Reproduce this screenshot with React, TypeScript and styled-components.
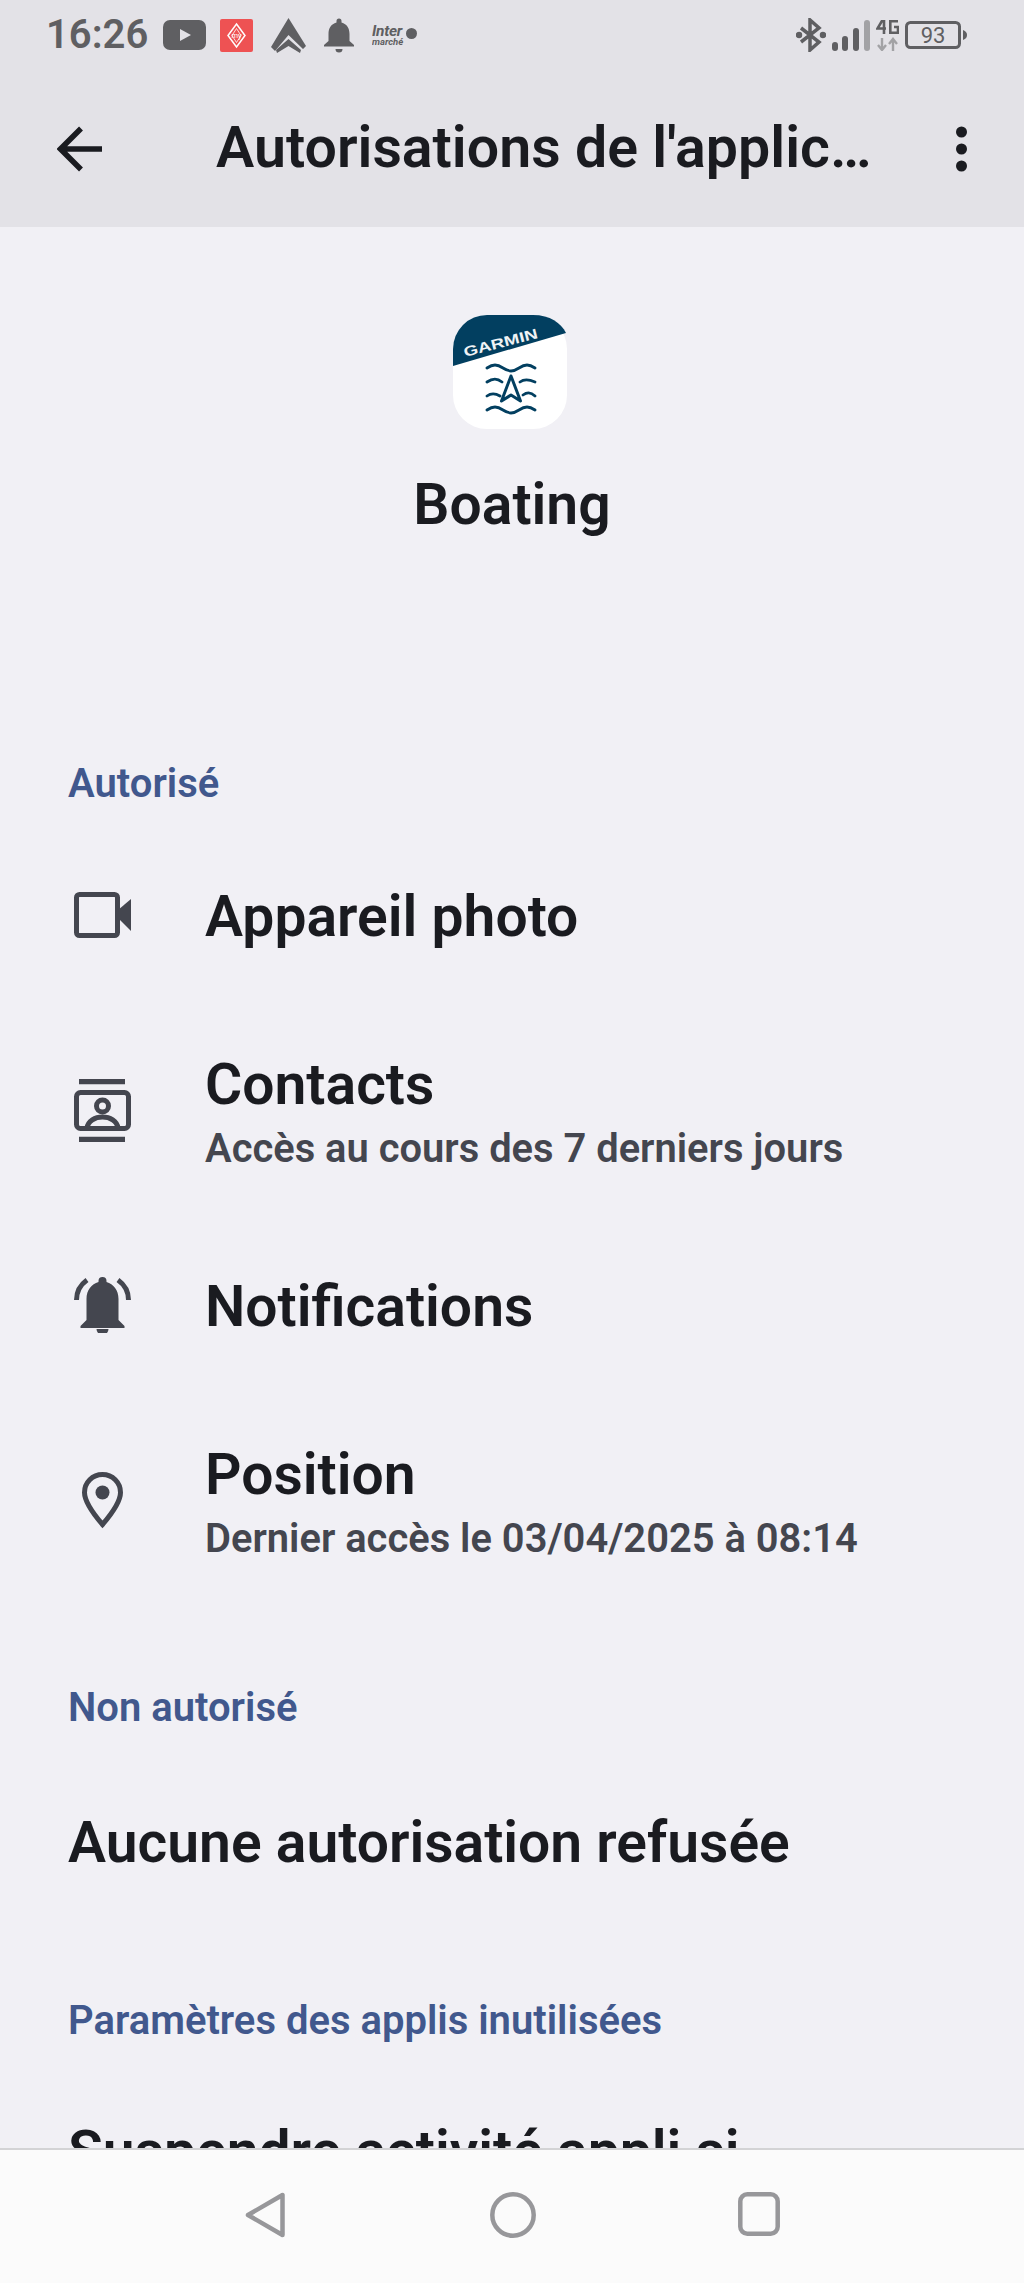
import React from 'react';
import styled, { createGlobalStyle } from 'styled-components';

const Global = createGlobalStyle`
  html, body { margin: 0; padding: 0; background: #f1f0f5; }
  body { font-family: Roboto, "Noto Sans", sans-serif; }
`;

const Page = styled.div`
  width: 1024px;
  height: 2283px;
  display: flex;
  flex-direction: column;
  overflow: hidden;
  background: #f1f0f5;
`;

const Top = styled.header`
  background: #e3e2e7;
  height: 227px;
  flex: none;
  display: flex;
  flex-direction: column;
`;

const StatusBar = styled.div`
  height: 70px;
  padding: 0 57px 0 46px;
  display: flex;
  align-items: center;
  justify-content: space-between;
  color: #5f5f62;
`;

const StatusGroup = styled.div<{ $gap: number }>`
  display: flex;
  align-items: center;
  gap: ${p => p.$gap}px;
`;

const TightSlot = styled.span`
  display: flex;
  margin-right: -4px;
`;

const Clock = styled.span`
  font-size: 40px;
  font-weight: 600;
  line-height: 1;
  margin-right: -3px;
`;

const Toolbar = styled.div`
  height: 157px;
  display: flex;
  align-items: center;
  padding: 0 57px;
`;

const Title = styled.h1`
  margin: 0 0 0 113px;
  font-size: 57.3px;
  font-weight: 600;
  color: #1a1b20;
  white-space: nowrap;
  line-height: 1.2;
`;

const Menu = styled.div`
  margin-left: auto;
  display: flex;
`;

const Body = styled.main`
  flex: 1;
  min-height: 0;
  overflow: hidden;
`;

const AppHead = styled.section`
  padding-top: 88px;
  display: flex;
  flex-direction: column;
  align-items: center;
  height: 441px;
  box-sizing: border-box;
`;

const LogoSlot = styled.div`
  display: flex;
  margin-right: 4px;
`;

const AppName = styled.h2`
  margin: 44px 0 0;
  font-size: 57px;
  font-weight: 600;
  line-height: 64px;
  color: #1a1b20;
`;

const SectionLabel = styled.h3<{ $top: number; $bottom: number }>`
  margin: ${p => p.$top}px 0 ${p => p.$bottom}px;
  padding-left: 68px;
  height: 60px;
  display: flex;
  align-items: center;
  font-size: 40px;
  font-weight: 600;
  color: #41588d;
`;

const Row = styled.div<{ $two?: boolean }>`
  height: ${p => (p.$two ? 210 : 180)}px;
  display: flex;
  align-items: center;
  padding-left: 64px;
`;

const IconSlot = styled.div`
  width: 77px;
  margin-right: 64px;
  padding-bottom: 4px;
  display: flex;
  justify-content: center;
  flex: none;
  color: #44464f;
`;

const RowText = styled.div`
  display: flex;
  flex-direction: column;
`;

const RowTitle = styled.div`
  font-size: 57px;
  font-weight: 600;
  line-height: 66px;
  color: #1a1b20;
`;

const RowSub = styled.div`
  font-size: 39.9px;
  font-weight: 600;
  line-height: 46px;
  margin-top: 8px;
  color: #44464f;
`;

const PlainRow = styled.div`
  height: 110px;
  padding-left: 68px;
  display: flex;
  align-items: center;
  font-size: 57px;
  font-weight: 600;
  color: #1a1b20;
  white-space: nowrap;
`;

const NavBar = styled.nav`
  height: 135px;
  flex: none;
  box-sizing: border-box;
  border-top: 2px solid #d3d3d5;
  background: #fbfbfb;
  display: flex;
  align-items: flex-start;
  padding: 42px 0 0 245px;
  color: #97979a;
`;

const NavButton = styled.div<{ $gap: number }>`
  display: flex;
  margin-right: ${p => p.$gap}px;
`;

const Back = () => (
  <svg width="46" height="46" viewBox="0 0 46 46" fill="none" stroke="#1a1b20" strokeWidth="5.5">
    <path d="M45 23H4M24 2.500 3.500 23 24 43.500" />
  </svg>
);

const Dots = () => (
  <svg width="11" height="46" viewBox="0 0 11 46" fill="#1a1b20">
    <circle cx="5.500" cy="6" r="5.500" />
    <circle cx="5.500" cy="23" r="5.500" />
    <circle cx="5.500" cy="40" r="5.500" />
  </svg>
);

const YouTube = () => (
  <svg width="43" height="30" viewBox="0 0 43 30">
    <rect width="43" height="30" rx="7" fill="#5f5f62" />
    <path d="M17 9v12l11-6z" fill="#e3e2e7" />
  </svg>
);

const MyRenault = () => (
  <svg width="33" height="33" viewBox="0 0 33 33">
    <rect width="33" height="33" rx="2" fill="#ee5253" />
    <path d="M16.500 5 25 16.500 16.500 28 8 16.500z" fill="none" stroke="#fff" strokeWidth="1.500" />
    <path d="M16.500 9.500 21 16.500 16.500 23.500 12 16.500z" fill="none" stroke="#fff" strokeWidth="1" opacity="0.8" />
    <text x="16.500" y="19" fontSize="7.500" fill="#fff" textAnchor="middle" fontFamily="Roboto, sans-serif">my</text>
  </svg>
);

const AutoArrow = () => (
  <svg width="35" height="35" viewBox="0 0 35 35" fill="#5f5f62">
    <path d="M17.500 0 35 28l-3 3-14.500-14L4 33 0 29z" />
    <path d="M17.500 21 30 32l-1 3-11.500-7L6 35l-1-3z" />
  </svg>
);

const StatusBell = () => (
  <svg width="30" height="35" viewBox="0 0 30 35" fill="#5f5f62">
    <path d="M12.500 3a2.500 2.500 0 0 1 5 0v1.500C23 6 25.500 10.500 25.500 16v7l4.500 4v1.500H0V27l4.500-4v-7C4.500 10.500 7 6 12.500 4.500z" />
    <path d="M11.500 31h7a3.500 3.500 0 0 1-7 0z" />
  </svg>
);

const Inter = () => (
  <svg width="46" height="30" viewBox="0 0 46 30" fill="#5f5f62">
    <text x="0" y="16" fontSize="15.500" fontWeight="700" fontStyle="italic" letterSpacing="-0.3" fontFamily="Roboto, sans-serif">Inter</text>
    <text x="0" y="25" fontSize="9.500" fontWeight="700" fontStyle="italic" fontFamily="Roboto, sans-serif">marché</text>
    <circle cx="39.500" cy="13.500" r="5.500" />
  </svg>
);

const Bluetooth = () => (
  <svg width="30" height="34" viewBox="0 0 30 34" fill="none" stroke="#5f5f62" strokeWidth="3.500">
    <path d="M5 10 23 24 14 32V2l9 8L5 24" />
    <circle cx="3" cy="17" r="1.500" fill="#5f5f62" />
    <circle cx="27" cy="17" r="1.500" fill="#5f5f62" />
  </svg>
);

const Signal = () => (
  <svg width="38" height="31" viewBox="0 0 38 31">
    <rect x="0" y="22" width="6" height="9" rx="3" fill="#5f5f62" />
    <rect x="10" y="16" width="6" height="15" rx="3" fill="#5f5f62" />
    <rect x="21" y="8" width="6" height="23" rx="3" fill="#5f5f62" />
    <rect x="32" y="0" width="6" height="31" rx="3" fill="#a2a2a5" />
  </svg>
);

const FourG = () => (
  <svg width="23" height="31" viewBox="0 0 23 31" fill="none">
    <path d="M6.500 0 1.500 8.500H10M8 0v14" stroke="#5f5f62" strokeWidth="2.600" />
    <path d="M22 1.300H14.300V12.700H22V7H18" stroke="#5f5f62" strokeWidth="2.600" />
    <path d="M6 18v12M2 25l4 5 4-5" stroke="#a2a2a5" strokeWidth="2.400" />
    <path d="M17 31V19M13 24l4-5 4 5" stroke="#a2a2a5" strokeWidth="2.400" />
  </svg>
);

const Battery = () => (
  <svg width="62" height="28" viewBox="0 0 62 28" fill="none">
    <rect x="1.500" y="1.500" width="53" height="25" rx="4" stroke="#5f5f62" strokeWidth="3" />
    <path d="M58 9c3 1 4 3 4 5s-1 4-4 5z" fill="#5f5f62" />
    <text x="28" y="22" fontSize="22" fill="#5f5f62" textAnchor="middle" fontFamily="Roboto, sans-serif">93</text>
  </svg>
);

const Logo = () => (
  <svg width="114" height="114" viewBox="0 0 114 114">
    <rect width="114" height="114" rx="34" fill="#fff" />
    <path d="M0 51V34A34 34 0 0 1 34 0h46c17 0 28 8 33 18z" fill="#023f60" />
    <text x="0" y="0" transform="translate(12 42) rotate(-14.600)" fontSize="14" fontWeight="700" textLength="76" lengthAdjust="spacingAndGlyphs" fill="#f0f3f5" fontFamily="'Liberation Sans', sans-serif">GARMIN</text>
    <g fill="none" stroke="#023f60" strokeWidth="2.800" strokeLinecap="round">
      <path d="M34 53c6-4 10-4 16 0s10 4 16 0 10-4 16 0" />
      <path d="M34 67c6-4 10-4 15 0M67 67c4-3 8-3 15 0" />
      <path d="M34 81c4-3 8-3 13 0M70 80c4-3 8-3 12 1" />
      <path d="M34 95c6-4 10-4 16 0s10 4 16 0 10-4 16 0" />
      <path d="M58 61 48.500 86l9.500-6 9.500 6z" strokeWidth="3" strokeLinecap="butt" strokeLinejoin="round" />
    </g>
  </svg>
);

const CameraIcon = () => (
  <svg width="57" height="46" viewBox="0 0 57 46" fill="currentColor">
    <rect x="2.500" y="2.500" width="41" height="41" rx="3" fill="none" stroke="currentColor" strokeWidth="5" />
    <path d="M44 18 57 7v32L44 26z" />
  </svg>
);

const ContactsIcon = () => (
  <svg width="57" height="63" viewBox="0 0 57 63" fill="none" stroke="currentColor" strokeWidth="5">
    <path d="M5 2.500h46M5 60.500h46" strokeWidth="5.500" />
    <rect x="2.500" y="13.500" width="52" height="36" rx="4" />
    <circle cx="28.500" cy="27" r="6" />
    <path d="M13 49c1-7 8-11 15.500-11S43 42 44 49" />
  </svg>
);

const BellIcon = () => (
  <svg width="57" height="56" viewBox="0 0 57 56" fill="currentColor">
    <path d="M24.500 4a4 4 0 0 1 8 0v1c7 2 12 8 12 17v21l6 6v2h-44v-2l6-6V22c0-9 5-15 12-17z" />
    <path d="M22.500 55h12a6 6 0 0 1-12 0z" transform="translate(0 -3)" />
    <path d="M13 3C6 8 2.500 15 2.500 23" fill="none" stroke="currentColor" strokeWidth="5" />
    <path d="M44 3c7 5 10.500 12 10.500 20" fill="none" stroke="currentColor" strokeWidth="5" />
  </svg>
);

const PinIcon = () => (
  <svg width="41" height="57" viewBox="0 0 41 57" fill="currentColor">
    <path d="M20.500 2.500c10 0 18 8 18 18 0 8-6 18-18 32-12-14-18-24-18-32 0-10 8-18 18-18z" fill="none" stroke="currentColor" strokeWidth="5" />
    <circle cx="20.500" cy="20.500" r="7" />
  </svg>
);

const NavBack = () => (
  <svg width="40" height="46" viewBox="0 0 40 46" fill="none" stroke="currentColor" strokeWidth="4.500" strokeLinejoin="round">
    <path d="M37.500 3v40L3 23z" />
  </svg>
);

const NavHome = () => (
  <svg width="46" height="46" viewBox="0 0 46 46" fill="none" stroke="currentColor" strokeWidth="4.500">
    <circle cx="23" cy="23" r="20.700" />
  </svg>
);

const NavRecent = () => (
  <svg width="42" height="44" viewBox="0 0 42 44" fill="none" stroke="currentColor" strokeWidth="4.500">
    <rect x="2.300" y="2.300" width="37.400" height="39.400" rx="7" />
  </svg>
);

const App = () => (
  <Page>
    <Global />
    <Top>
      <StatusBar>
        <StatusGroup $gap={18}>
          <Clock>16:26</Clock>
          <TightSlot><YouTube /></TightSlot>
          <MyRenault />
          <AutoArrow />
          <StatusBell />
          <Inter />
        </StatusGroup>
        <StatusGroup $gap={6}>
          <Bluetooth />
          <Signal />
          <FourG />
          <Battery />
        </StatusGroup>
      </StatusBar>
      <Toolbar>
        <Back />
        <Title>Autorisations de l'applic…</Title>
        <Menu><Dots /></Menu>
      </Toolbar>
    </Top>
    <Body>
      <AppHead>
        <LogoSlot><Logo /></LogoSlot>
        <AppName>Boating</AppName>
      </AppHead>
      <SectionLabel $top={85} $bottom={14}>Autorisé</SectionLabel>
      <Row>
        <IconSlot><CameraIcon /></IconSlot>
        <RowText><RowTitle>Appareil photo</RowTitle></RowText>
      </Row>
      <Row $two>
        <IconSlot><ContactsIcon /></IconSlot>
        <RowText>
          <RowTitle>Contacts</RowTitle>
          <RowSub>Accès au cours des 7 derniers jours</RowSub>
        </RowText>
      </Row>
      <Row>
        <IconSlot><BellIcon /></IconSlot>
        <RowText><RowTitle>Notifications</RowTitle></RowText>
      </Row>
      <Row $two>
        <IconSlot><PinIcon /></IconSlot>
        <RowText>
          <RowTitle>Position</RowTitle>
          <RowSub>Dernier accès le 03/04/2025 à 08:14</RowSub>
        </RowText>
      </Row>
      <SectionLabel $top={70} $bottom={50}>Non autorisé</SectionLabel>
      <PlainRow>Aucune autorisation refusée</PlainRow>
      <SectionLabel $top={93} $bottom={46}>Paramètres des applis inutilisées</SectionLabel>
      <PlainRow>Suspendre activité appli si</PlainRow>
    </Body>
    <NavBar>
      <NavButton $gap={205}><NavBack /></NavButton>
      <NavButton $gap={202}><NavHome /></NavButton>
      <NavButton $gap={0}><NavRecent /></NavButton>
    </NavBar>
  </Page>
);

export default App;
